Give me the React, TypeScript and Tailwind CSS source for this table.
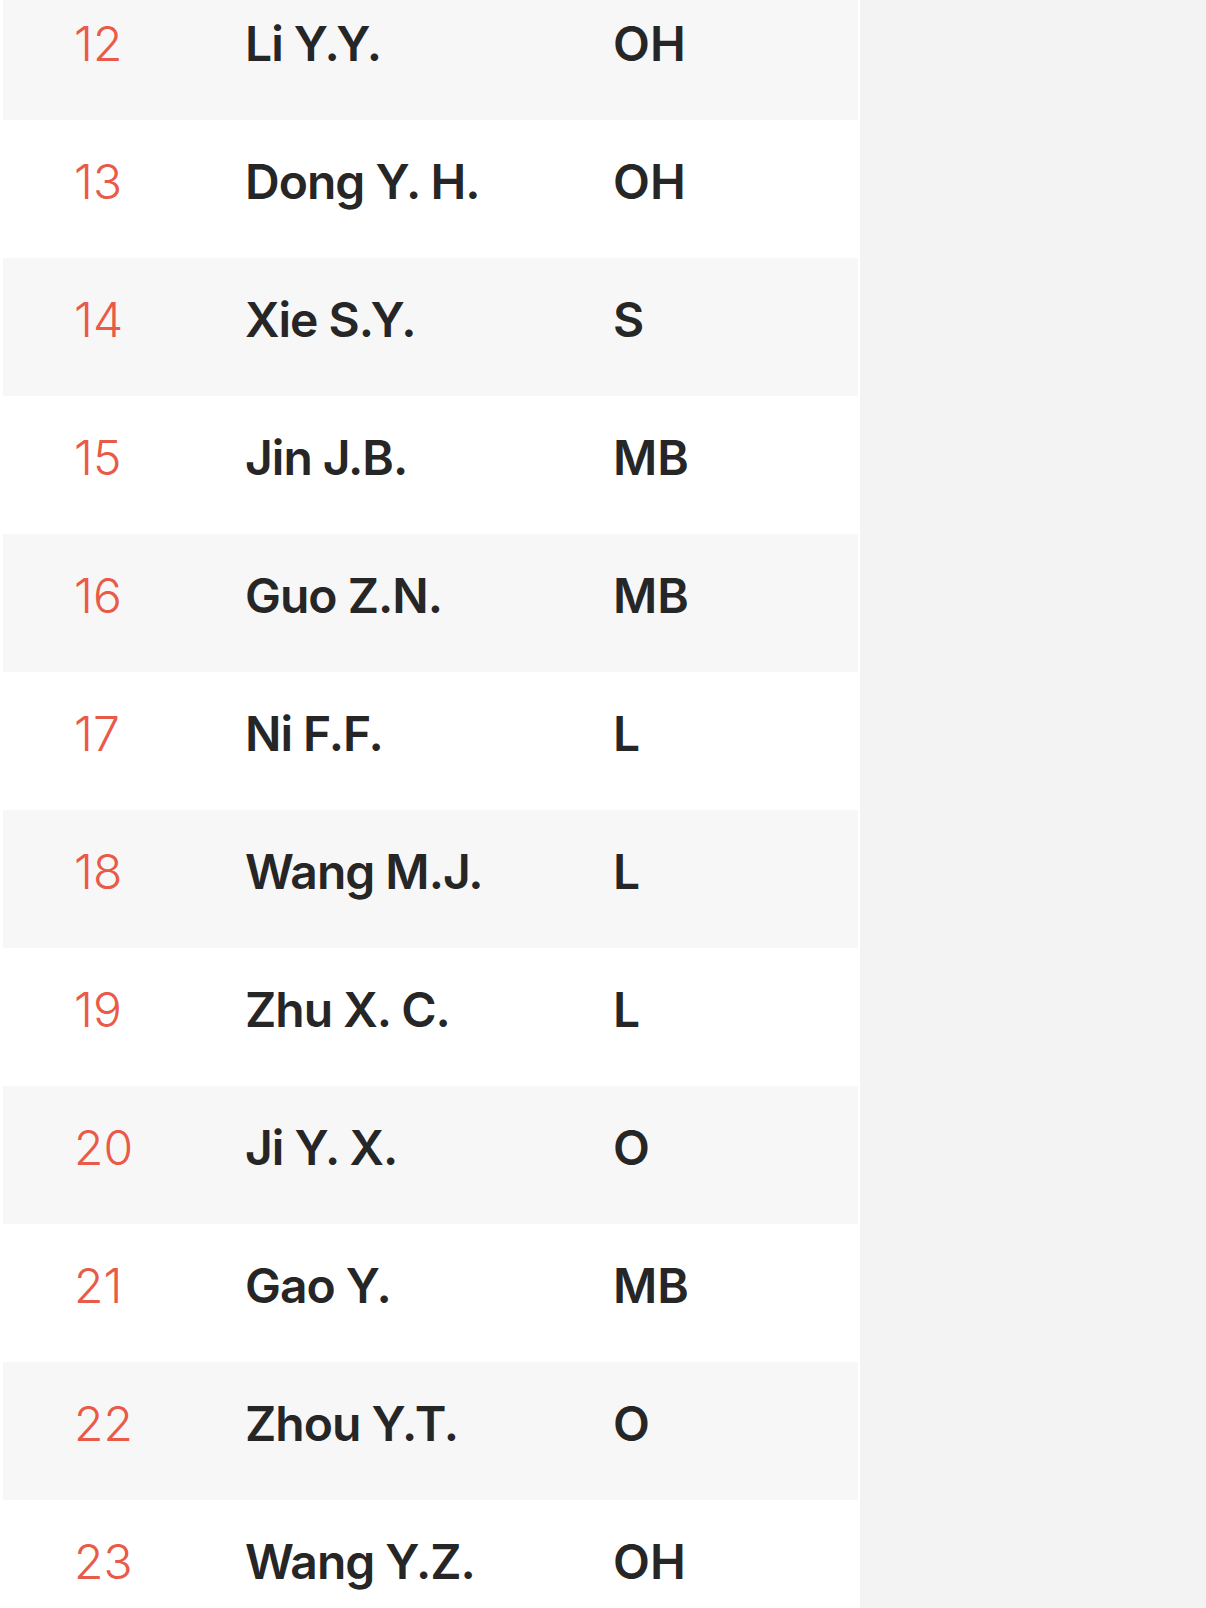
import React from "react";

const rows: [string, string, string][] = [
  ["12", "Li Y.Y.", "OH"],
  ["13", "Dong Y. H.", "OH"],
  ["14", "Xie S.Y.", "S"],
  ["15", "Jin J.B.", "MB"],
  ["16", "Guo Z.N.", "MB"],
  ["17", "Ni F.F.", "L"],
  ["18", "Wang M.J.", "L"],
  ["19", "Zhu X. C.", "L"],
  ["20", "Ji Y. X.", "O"],
  ["21", "Gao Y.", "MB"],
  ["22", "Zhou Y.T.", "O"],
  ["23", "Wang Y.Z.", "OH"],
];

export default function App() {
  return (
    <div
      className="flex h-[1608px] w-full overflow-hidden bg-[#f3f3f3]"
      style={{ fontFamily: "Inter, 'Noto Sans', sans-serif" }}
    >
      <div className="w-[860px] shrink-0 bg-white pl-[3px] pr-[2px]">
        <div className="mt-[-18px] flex flex-col">
          {rows.map(([num, name, pos], i) => (
            <div
              key={num}
              className={`grid h-[138px] grid-cols-[242px_368px_1fr] pt-[38px] text-[48px] leading-[48px] ${
                i % 2 === 0 ? "bg-[#f7f7f7]" : "bg-white"
              }`}
            >
              <div className="pl-[71px] font-light text-[#e95a48]">{num}</div>
              <div className="font-semibold tracking-[-1px] text-[#262626]">{name}</div>
              <div className="font-semibold text-[#262626]">{pos}</div>
            </div>
          ))}
        </div>
      </div>
      <div className="flex-1" />
    </div>
  );
}
